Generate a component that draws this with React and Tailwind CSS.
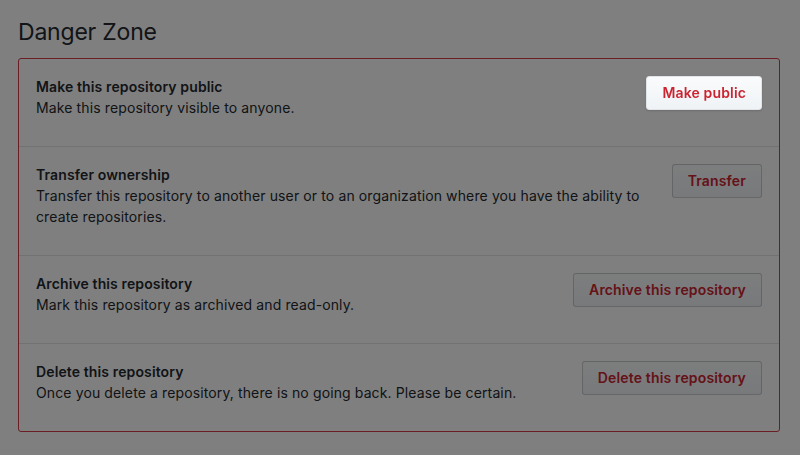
import React from 'react';

const rows = [
  {
    title: 'Make this repository public',
    desc: 'Make this repository visible to anyone.',
    action: 'Make public',
    highlight: true,
  },
  {
    title: 'Transfer ownership',
    desc: 'Transfer this repository to another user or to an organization where you have the ability to create repositories.',
    action: 'Transfer',
  },
  {
    title: 'Archive this repository',
    desc: 'Mark this repository as archived and read-only.',
    action: 'Archive this repository',
  },
  {
    title: 'Delete this repository',
    desc: 'Once you delete a repository, there is no going back. Please be certain.',
    action: 'Delete this repository',
  },
];

function DangerButton({ label, highlight }) {
  return (
    <button
      type="button"
      className={`shrink-0 px-[15px] py-[6px] text-sm leading-5 font-semibold tracking-[0.15px] text-[#cb2431] rounded-[3px] border bg-gradient-to-b from-[#fafbfc] to-[#eff3f6] ${
        highlight
          ? 'relative z-20 border-[#e1e4e8] shadow-[0_1px_2px_rgba(0,0,0,0.15)]'
          : 'border-[rgba(27,31,35,0.2)]'
      }`}
    >
      {label}
    </button>
  );
}

export default function App() {
  return (
    <div
      className="min-h-screen bg-white pl-[18px] pr-[20px] pt-[14px] text-[#24292e]"
      style={{ fontFamily: 'Inter, "Noto Sans", sans-serif' }}
    >
      <h2 className="text-[23px] leading-9 font-normal tracking-[-0.2px] mb-[8px]">Danger Zone</h2>

      <div className="border border-[#d73a49] rounded-[3px]">
        {rows.map((row, i) => (
          <div
            key={row.title}
            className={`flex items-start gap-6 px-[17px] pt-[17px] pb-[18px] ${i > 0 ? 'border-t border-[#e1e4e8]' : ''}`}
          >
            <div className="flex-1 text-sm leading-[21px] tracking-[0.12px]">
              <p className="font-semibold">{row.title}</p>
              <p className="mb-[10px]">{row.desc}</p>
            </div>
            <DangerButton label={row.action} highlight={row.highlight} />
          </div>
        ))}
      </div>

      {/* dimmed backdrop, the highlighted button sits above it */}
      <div className="fixed inset-0 bg-black/50 z-10" />
    </div>
  );
}
